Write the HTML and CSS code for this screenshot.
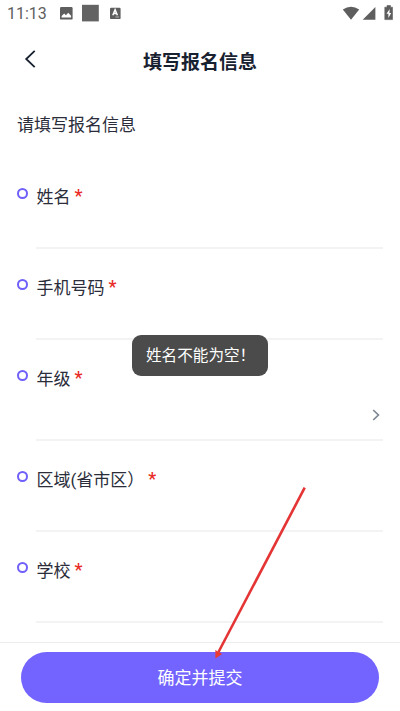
FILE: index.html
```html
<!DOCTYPE html>
<html lang="zh-CN">
<head>
<meta charset="utf-8">
<title>填写报名信息</title>
<link rel="stylesheet" href="styles.css">
</head>
<body>
<div class="screen">
  <div class="status">
    <span class="clock">11:13</span>
    <svg class="status-left" width="64" height="18" viewBox="0 0 64 18">
      <rect x="3" y="3" width="12.6" height="12.6" rx="1.2" fill="#5e5e5e"/>
      <path d="M4.6 13.4V12l2.6-2.6 1.7 1.8 2.3-2.4 2.9 3v1.6z" fill="#fff"/>
      <rect x="25" y="0.8" width="16.8" height="16.6" fill="#636363"/>
      <rect x="53" y="3.7" width="10.6" height="11.4" rx="1.2" fill="#5e5e5e"/>
      <path d="M55.8 11.2l2.3-5.6 2.3 5.6M56.8 9.5h2.7" fill="none" stroke="#fff" stroke-width="1.5"/>
      <path d="M58.5 13h3.6" stroke="#ccc" stroke-width="0.8"/>
    </svg>
    <svg class="status-right" width="52" height="18" viewBox="0 0 52 18">
      <path d="M0.8 5.600Q9 0 17.200 5.600L9 15.800z" fill="#5e5e5e"/>
      <path d="M33.400 3v12.800H20.700z" fill="#5e5e5e"/>
      <path d="M42.800 3.200H45V1.500h3.500v1.700h2v12.400H42.800z" fill="#5e5e5e" stroke="#5e5e5e" stroke-width=".6" stroke-linejoin="round"/>
      <path d="M47.700 5L44.500 9.800h1.900v4.200l2.800-5.100h-1.800z" fill="#fff"/>
    </svg>
  </div>
  <header class="header">
    <svg class="back" width="12" height="20" viewBox="0 0 12 20"><path d="M10.700 1.800L2.200 10l8.500 8.200" fill="none" stroke="#17212f" stroke-width="1.800"/></svg>
    <h1 class="title">填写报名信息</h1>
  </header>
  <main class="form">
    <p class="intro">请填写报名信息</p>
    <div class="field"><i class="dot"></i><div class="cell"><label>姓名<b class="star">*</b></label></div></div>
    <div class="field"><i class="dot"></i><div class="cell"><label>手机号码<b class="star">*</b></label></div></div>
    <div class="field select"><i class="dot"></i><div class="cell"><label>年级<b class="star">*</b></label>
      <svg class="chevron" width="8" height="12" viewBox="0 0 8 12"><path d="M1.200 1l5.200 5-5.200 5" fill="none" stroke="#7e8794" stroke-width="1.700"/></svg></div></div>
    <div class="field"><i class="dot"></i><div class="cell"><label>区域(省市区）<b class="star">*</b></label></div></div>
    <div class="field"><i class="dot"></i><div class="cell"><label>学校<b class="star">*</b></label></div></div>
  </main>
  <footer class="footer"><button class="submit" type="button">确定并提交</button></footer>
  <div class="toast">姓名不能为空！</div>
  <svg class="arrow" width="100" height="180" viewBox="0 0 100 180">
    <path d="M94.700 7.700L8.500 172" stroke="#e43434" stroke-width="2.600" fill="none"/>
    <path d="M5.400 178.400V170L12.200 174z" fill="#ea3b32"/>
  </svg>
</div>
</body>
</html>
```
FILE: styles.css
```css
* { box-sizing: border-box; }
body {
  margin: 0;
  background: #fff;
  font-family: Roboto, "Noto Sans CJK SC", sans-serif;
  color: #2b2d3a;
}
.screen {
  position: relative;
  display: flex;
  flex-direction: column;
  width: 400px;
  height: 711px;
  overflow: hidden;
}
.status {
  display: flex;
  align-items: center;
  height: 28px;
  padding: 0 6px 2px 7px;
}
.clock {
  width: 50px;
  padding-top: 1px;
  font-size: 16px;
  line-height: 18px;
  color: #5e5e5e;
}
.status-right { margin-left: auto; }
.header {
  display: grid;
  grid-template-columns: 40px 1fr 40px;
  align-items: center;
  height: 67px;
}
.back { margin: -6px 0 0 24px; }
.title {
  margin: 0;
  padding-top: 2px;
  font-size: 19px;
  font-weight: 700;
  line-height: 28px;
  text-align: center;
  color: #17212f;
}
.form {
  flex: 1;
  padding: 0 17px;
}
.intro {
  height: 63px;
  margin: 0;
  padding-top: 18px;
  font-size: 17px;
  line-height: 25px;
}
.field {
  display: flex;
  height: 91px;
}
.field.select { height: 101px; }
.dot {
  width: 11px;
  height: 11px;
  margin: 30px 8px 0 0;
  border: 2.5px solid #6f5ffb;
  border-radius: 50%;
}
.cell {
  display: flex;
  flex: 1;
  flex-direction: column;
  padding-top: 27px;
  border-bottom: 2px solid #f3f3f4;
}
.cell label {
  height: 25px;
  padding-left: 0.5px;
  font-size: 17px;
  line-height: 25px;
}
.star {
  margin-left: 4px;
  font-size: 18px;
  font-weight: 500;
  line-height: 1;
  vertical-align: 1px;
  color: #e92b26;
}
.chevron { margin: 17px 3px 0 auto; }
.footer {
  height: 69px;
  padding: 9px 21px;
  border-top: 1px solid #ececee;
}
.submit {
  display: block;
  width: 100%;
  height: 51px;
  padding: 0 0 3px;
  border: 0;
  border-radius: 26px;
  background: #7364ff;
  color: #fff;
  font: inherit;
  font-size: 17px;
}
.toast {
  position: absolute;
  left: 132px;
  top: 335px;
  width: 136px;
  height: 41px;
  padding: 2px 0 0 14px;
  border-radius: 9px;
  background: #4b4b4b;
  color: #fff;
  font-size: 15.600px;
  line-height: 39px;
  white-space: nowrap;
}
.arrow {
  position: absolute;
  left: 210px;
  top: 480px;
}
```
